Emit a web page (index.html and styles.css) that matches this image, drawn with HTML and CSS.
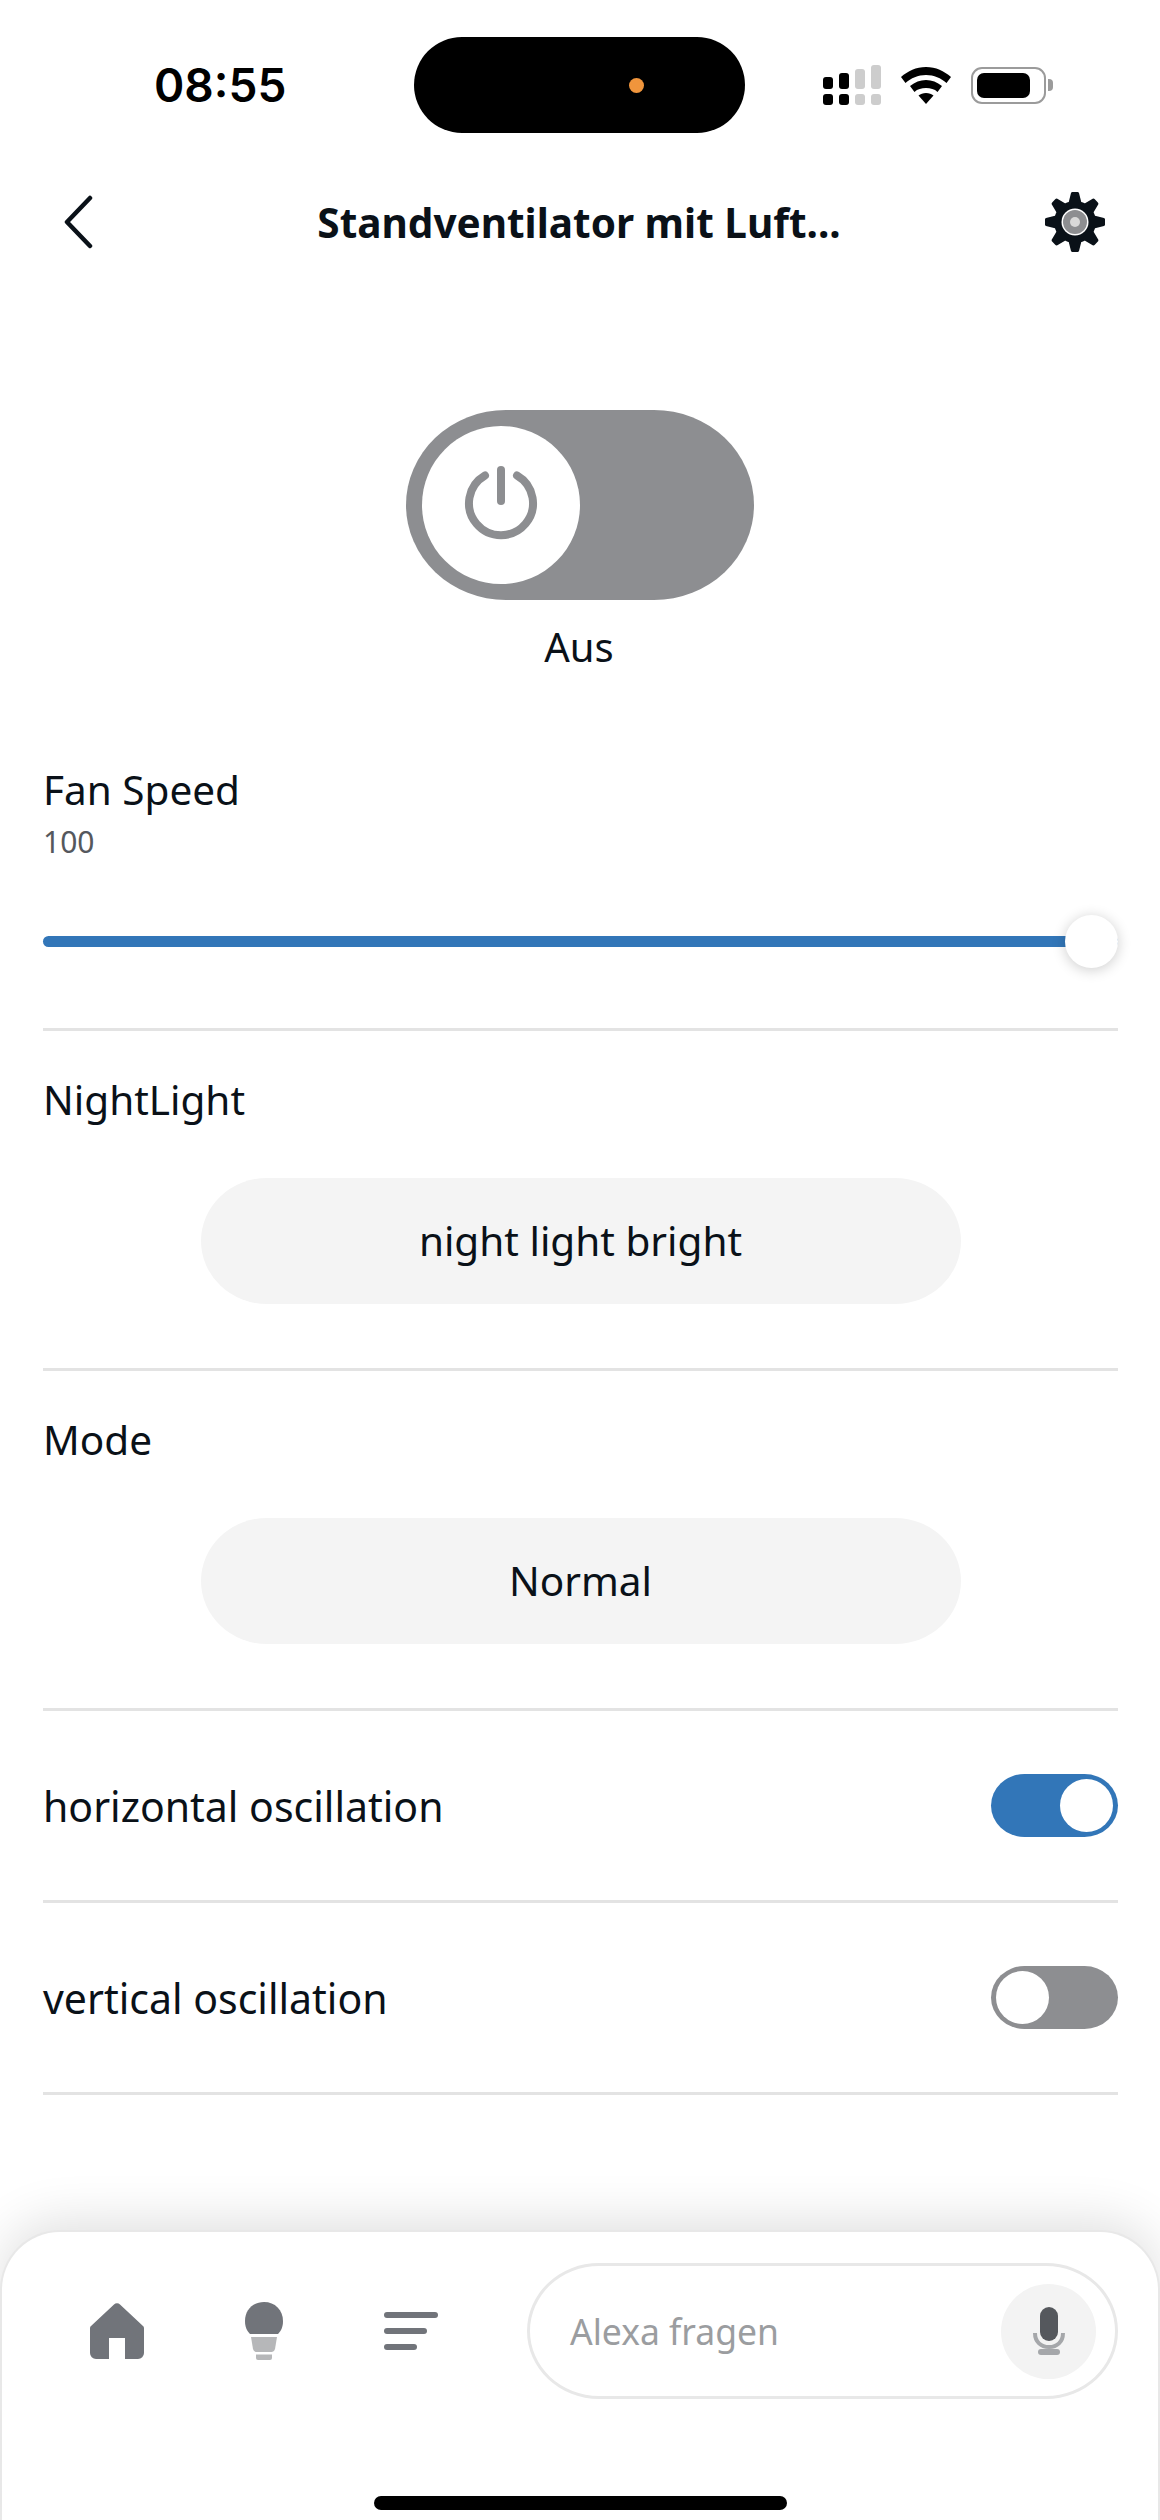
FILE: index.html
```html
<!DOCTYPE html>
<html>
<head>
    <title>Standventilator</title>
    <link rel="stylesheet" href="styles.css">
</head>
<body>
    <div class="screen">
        <div class="status-bar">
            <div class="time">08:55</div>
            <div class="island"><span class="island-dot"></span></div>
            <div class="status-icons">
                <svg class="signal" width="58" height="40" viewBox="0 0 58 40">
                    <g fill="#000">
                        <rect x="0" y="12" width="10" height="12" rx="3"/>
                        <rect x="16" y="8" width="10" height="16" rx="3"/>
                        <rect x="0" y="29" width="10" height="11" rx="3"/>
                        <rect x="16" y="29" width="10" height="11" rx="3"/>
                    </g>
                    <g fill="#cdcdcd">
                        <rect x="32" y="4" width="10" height="20" rx="3"/>
                        <rect x="48" y="0" width="10" height="24" rx="3"/>
                        <rect x="32" y="29" width="10" height="11" rx="3"/>
                        <rect x="48" y="29" width="10" height="11" rx="3"/>
                    </g>
                </svg>
                <svg class="wifi" width="50" height="37" viewBox="0 0 50 37">
                    <path d="M25 0C15 0 7 4 0 10l4.500 6C10 11 17 8 25 8s15 3 20.500 8L50 10C43 4 35 0 25 0z"/>
                    <path d="M25 13c-6 0-11 2-16 6l4.500 6c3-3 7-4 11.500-4s8.500 1 11.500 4L41 19c-5-4-10-6-16-6z"/>
                    <path d="M25 26c-3 0-5.500 1-7.500 2.500L25 37l7.500-8.500C30.500 27 28 26 25 26z"/>
                </svg>
                <div class="battery">
                    <div class="battery-body"><span class="battery-fill"></span></div>
                    <span class="battery-nub"></span>
                </div>
            </div>
        </div>

        <div class="header">
            <svg class="back" width="30" height="54" viewBox="0 0 30 54">
                <path d="M27 3L4 27l23 24" fill="none" stroke="#0a1118" stroke-width="4.500" stroke-linecap="round" stroke-linejoin="round"/>
            </svg>
            <div class="title">Standventilator mit Luft...</div>
            <svg class="gear" width="60" height="60" viewBox="0 0 60 60">
                <g fill="#0a1118">
                    <circle cx="30" cy="30" r="21"/>
                    <path d="M26 1a2 2 0 0 1 2-1h4a2 2 0 0 1 2 1l3 12H23z"/>
                    <path d="M26 1a2 2 0 0 1 2-1h4a2 2 0 0 1 2 1l3 12H23z" transform="rotate(45 30 30)"/>
                    <path d="M26 1a2 2 0 0 1 2-1h4a2 2 0 0 1 2 1l3 12H23z" transform="rotate(90 30 30)"/>
                    <path d="M26 1a2 2 0 0 1 2-1h4a2 2 0 0 1 2 1l3 12H23z" transform="rotate(135 30 30)"/>
                    <path d="M26 1a2 2 0 0 1 2-1h4a2 2 0 0 1 2 1l3 12H23z" transform="rotate(180 30 30)"/>
                    <path d="M26 1a2 2 0 0 1 2-1h4a2 2 0 0 1 2 1l3 12H23z" transform="rotate(225 30 30)"/>
                    <path d="M26 1a2 2 0 0 1 2-1h4a2 2 0 0 1 2 1l3 12H23z" transform="rotate(270 30 30)"/>
                    <path d="M26 1a2 2 0 0 1 2-1h4a2 2 0 0 1 2 1l3 12H23z" transform="rotate(315 30 30)"/>
                </g>
                <circle cx="30" cy="30" r="13.500" fill="#fff"/>
                <circle cx="30" cy="30" r="12" fill="#8d8e91"/>
                <circle cx="30" cy="30" r="5" fill="#d9d9d9"/>
            </svg>
        </div>

        <div class="power">
            <div class="power-toggle">
                <div class="power-knob">
                    <svg width="76" height="78" viewBox="0 0 76 78">
                        <path d="M22 9.500a32 32 0 1 0 32 0" fill="none" stroke="#8d8e91" stroke-width="8" stroke-linecap="round"/>
                        <path d="M38 4v31" fill="none" stroke="#8d8e91" stroke-width="8" stroke-linecap="round"/>
                    </svg>
                </div>
            </div>
            <div class="power-label">Aus</div>
        </div>

        <div class="controls">
            <div class="section slider-section">
                <div class="label">Fan Speed</div>
                <div class="value">100</div>
                <div class="slider">
                    <div class="slider-track"></div>
                    <div class="slider-thumb"></div>
                </div>
            </div>
            <div class="section select-section">
                <div class="label">NightLight</div>
                <div class="select">night light bright</div>
            </div>
            <div class="section select-section">
                <div class="label">Mode</div>
                <div class="select">Normal</div>
            </div>
            <div class="section toggle-section">
                <div class="label">horizontal oscillation</div>
                <div class="toggle on"><span class="toggle-knob"></span></div>
            </div>
            <div class="section toggle-section">
                <div class="label">vertical oscillation</div>
                <div class="toggle"><span class="toggle-knob"></span></div>
            </div>
        </div>

        <div class="bottom-bar">
            <div class="nav">
                <svg class="nav-home" width="54" height="56" viewBox="0 0 54 56">
                    <path d="M24 1.500a4 4 0 0 1 6 0L53 23a3 3 0 0 1 1 2.500V50a6 6 0 0 1-6 6H35V35H19v21H6a6 6 0 0 1-6-6V25.500A3 3 0 0 1 1 23z" fill="#71747a"/>
                </svg>
                <svg class="nav-bulb" width="38" height="58" viewBox="0 0 38 58">
                    <path d="M19 0C8 0 0 8 0 19c0 6 2 10 5 13h28c3-3 5-7 5-13C38 8 30 0 19 0z" fill="#71747a"/>
                    <path d="M6 35h26l-2 12a4 4 0 0 1-3 3H11a4 4 0 0 1-3-3z" fill="#b6b7b9"/>
                    <path d="M11 52.500h16V56a2 2 0 0 1-2 2H13a2 2 0 0 1-2-2z" fill="#b6b7b9"/>
                </svg>
                <svg class="nav-list" width="54" height="38" viewBox="0 0 54 38">
                    <rect x="0" y="0" width="54" height="6" rx="3" fill="#71747a"/>
                    <rect x="0" y="16" width="43" height="6" rx="3" fill="#71747a"/>
                    <rect x="0" y="32" width="33" height="6" rx="3" fill="#71747a"/>
                </svg>
            </div>
            <div class="ask">
                <span class="ask-text">Alexa fragen</span>
                <div class="mic">
                    <svg width="32" height="48" viewBox="0 0 32 48">
                        <rect x="7" y="0" width="18" height="34" rx="9" fill="#55585d"/>
                        <path d="M2 26c0 9 6 14 14 14s14-5 14-14" fill="none" stroke="#a5a7aa" stroke-width="4"/>
                        <rect x="5" y="42" width="22" height="6" rx="3" fill="#a5a7aa"/>
                    </svg>
                </div>
            </div>
            <div class="home-indicator"></div>
        </div>
    </div>
</body>
</html>
```

FILE: styles.css
```css
body {
    margin: 0;
    font-family: "Noto Sans", Arial, sans-serif;
    color: #0a1118;
    background-color: #fff;
}
.screen {
    display: flex;
    flex-direction: column;
    width: 1160px;
    height: 2520px;
    overflow: hidden;
}

/* status bar */
.status-bar {
    display: flex;
    align-items: center;
    height: 96px;
    margin-top: 37px;
    padding-left: 154px;
}
.time {
    width: 260px;
    font-family: Inter, Arial, sans-serif;
    font-size: 46px;
    font-weight: 600;
    color: #000;
}
.island {
    display: flex;
    align-items: center;
    width: 331px;
    height: 96px;
    border-radius: 48px;
    background-color: #000;
}
.island-dot {
    width: 15px;
    height: 15px;
    margin-left: 215px;
    border-radius: 50%;
    background-color: #f0953c;
}
.status-icons {
    display: flex;
    align-items: center;
    margin-left: 78px;
}
.wifi {
    margin-left: 20px;
}
.battery {
    display: flex;
    align-items: center;
    margin-left: 20px;
}
.battery-body {
    display: flex;
    box-sizing: border-box;
    width: 75px;
    height: 37px;
    padding: 4px;
    border: 2px solid #9b9b9b;
    border-radius: 11px;
}
.battery-fill {
    width: 53px;
    border-radius: 7px;
    background-color: #000;
}
.battery-nub {
    width: 5px;
    height: 12px;
    margin-left: 2px;
    border-radius: 0 4px 4px 0;
    background-color: #9b9b9b;
}

/* header */
.header {
    display: flex;
    align-items: center;
    margin-top: 59px;
    padding: 0 55px 0 63px;
}
.title {
    flex: 1;
    margin-left: 20px;
    text-align: center;
    font-size: 40.500px;
    font-weight: 700;
}

/* power */
.power {
    display: flex;
    flex-direction: column;
    align-items: center;
    margin-top: 158px;
}
.power-toggle {
    display: flex;
    align-items: center;
    box-sizing: border-box;
    width: 348px;
    height: 190px;
    padding-left: 16px;
    border-radius: 100px / 95px;
    background-color: #8d8e91;
}
.power-knob {
    display: flex;
    align-items: center;
    justify-content: center;
    width: 158px;
    height: 158px;
    border-radius: 50%;
    background-color: #fff;
}
.power-label {
    margin-top: 20px;
    margin-right: 2px;
    font-size: 40px;
    line-height: 54px;
}

/* controls */
.controls {
    padding: 0 42px 0 43px;
    margin-top: 89px;
}
.section {
    border-bottom: 3px solid #e3e3e3;
}
.label {
    font-size: 40.500px;
    line-height: 54px;
}
.value {
    margin-top: 5px;
    font-size: 30px;
    line-height: 40px;
    color: #55585d;
}
.slider {
    position: relative;
    height: 53px;
    margin-top: 53px;
    margin-bottom: 60px;
}
.slider-track {
    position: relative;
    top: 21px;
    height: 11px;
    border-radius: 6px;
    background-color: #3276b8;
}
.slider-thumb {
    position: absolute;
    top: 0;
    right: 0;
    width: 53px;
    height: 53px;
    border-radius: 50%;
    background-color: #fff;
    box-shadow: 0 2px 14px rgba(0, 0, 0, 0.2);
}
.select-section {
    padding-top: 42px;
    padding-bottom: 64px;
}
.select {
    width: 760px;
    height: 126px;
    margin: 51px auto 0;
    border-radius: 66px / 63px;
    background-color: #f4f4f4;
    text-align: center;
    font-size: 40.500px;
    line-height: 126px;
}
.toggle-section {
    display: flex;
    align-items: center;
    justify-content: space-between;
    height: 189px;
}
.toggle-section .label {
    font-size: 41px;
}
.toggle {
    display: flex;
    align-items: center;
    box-sizing: border-box;
    width: 127px;
    height: 63px;
    padding: 0 5px;
    border-radius: 34px / 32px;
    background-color: #8d8e91;
}
.toggle.on {
    justify-content: flex-end;
    background-color: #3276b8;
}
.toggle-knob {
    width: 53px;
    height: 53px;
    border-radius: 50%;
    background-color: #fff;
}

/* bottom bar */
.bottom-bar {
    display: flex;
    flex-wrap: wrap;
    align-items: flex-start;
    box-sizing: border-box;
    height: 290px;
    margin-top: auto;
    padding-top: 31px;
    border: 2px solid #e8e8e8;
    border-bottom: none;
    border-radius: 60px 60px 0 0;
    background-color: #fff;
    box-shadow: 0 -10px 50px rgba(0, 0, 0, 0.12);
}
.nav {
    display: flex;
    align-items: center;
    width: 525px;
    height: 136px;
}
.nav-home {
    margin-left: 88px;
}
.nav-bulb {
    margin-left: 101px;
}
.nav-list {
    margin-left: 101px;
}
.ask {
    display: flex;
    align-items: center;
    justify-content: space-between;
    box-sizing: border-box;
    width: 591px;
    height: 136px;
    padding: 0 19px 0 40px;
    border: 3px solid #e8e8e8;
    border-radius: 72px / 68px;
}
.ask-text {
    font-size: 35.500px;
    color: #9b9da0;
}
.mic {
    display: flex;
    align-items: center;
    justify-content: center;
    width: 95px;
    height: 95px;
    border-radius: 50%;
    background-color: #f3f3f3;
}
.home-indicator {
    width: 413px;
    height: 14px;
    margin: 87px 0 0 372px;
    border-radius: 7px;
    background-color: #000;
}
```
